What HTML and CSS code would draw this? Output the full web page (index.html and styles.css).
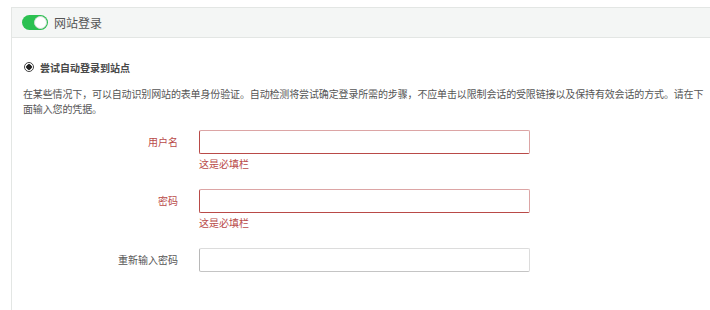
FILE: index.html
```html
<html>

<head>
    <meta charset="UTF-8">
    <meta name="viewport" content="width=device-width, initial-scale=1.0">
    <link rel="stylesheet" href="styles.css">
</head>

<body>
    <div class="panel">
        <div class="head">
            <span class="switch"><span class="knob"></span></span>
            <span class="title">网站登录</span>
        </div>
        <div class="body">
            <label class="radio"><span class="dot"></span>尝试自动登录到站点</label>
            <p class="desc">在某些情况下，可以自动识别网站的表单身份验证。自动检测将尝试确定登录所需的步骤，不应单击以限制会话的受限链接以及保持有效会话的方式。请在下面输入您的凭据。</p>
            <div class="row err">
                <label>用户名</label>
                <div class="field"><input type="text"><div class="msg">这是必填栏</div></div>
            </div>
            <div class="row err">
                <label>密码</label>
                <div class="field"><input type="password"><div class="msg">这是必填栏</div></div>
            </div>
            <div class="row">
                <label>重新输入密码</label>
                <div class="field"><input type="password"></div>
            </div>
        </div>
    </div>
</body>

</html>
```

FILE: styles.css
```css
body {
    margin: 0;
    font-family: "Noto Sans CJK SC", "Noto Sans", sans-serif;
    color: #555;
    background: #fff;
    overflow: hidden;
}
.panel {
    margin: 7px 0 0 11px;
    height: 310px;
    border-top: 1px solid #e3e6e4;
    border-left: 1px solid #e3e6e4;
}
.head {
    display: flex;
    align-items: center;
    height: 29px;
    padding-left: 10px;
    background: #f4f6f5;
    border-bottom: 1px solid #e3e6e4;
}
.switch {
    display: flex;
    justify-content: flex-end;
    align-items: center;
    width: 26px;
    height: 15px;
    border-radius: 8px;
    background: #2bc151;
    padding: 0 1px;
    box-sizing: border-box;
}
.knob {
    width: 13px;
    height: 13px;
    box-sizing: border-box;
    border: 1px solid #d8ddd9;
    border-radius: 50%;
    background: #fff;
}
.title {
    margin-left: 6px;
    font-size: 12px;
    color: #555;
}
.body {
    padding: 22px 0 0 12px;
}
.radio {
    display: flex;
    align-items: center;
    height: 14px;
    font-size: 10px;
    font-weight: 600;
    color: #484848;
}
.dot {
    flex-shrink: 0;
    width: 8px;
    height: 8px;
    margin-right: 6px;
    border: 1px solid #444;
    border-radius: 50%;
    background: radial-gradient(circle, #222 0 2.5px, #fff 3px);
}
.desc {
    margin: 12px 0 14px -1px;
    font-size: 10px;
    line-height: 15px;
    letter-spacing: -0.14px;
    color: #555;
}
.row {
    display: flex;
    align-items: flex-start;
    height: 59px;
}
.row label {
    width: 154px;
    margin-right: 21px;
    line-height: 24px;
    text-align: right;
    font-size: 10px;
    color: #555;
}
.row input {
    display: block;
    width: 331px;
    height: 24px;
    box-sizing: border-box;
    border: 1px solid;
    border-color: #dcdcdc #dcdcdc #c4c4c4 #b8b8b8;
    border-radius: 2px;
    background: #fff;
}
.err label {
    color: #b94a48;
}
.err input {
    border-color: #dca5a5 #dca5a5 #b94a48 #b94a48;
}
.msg {
    margin-top: 3px;
    line-height: 14px;
    font-size: 10px;
    color: #b94a48;
}
```
